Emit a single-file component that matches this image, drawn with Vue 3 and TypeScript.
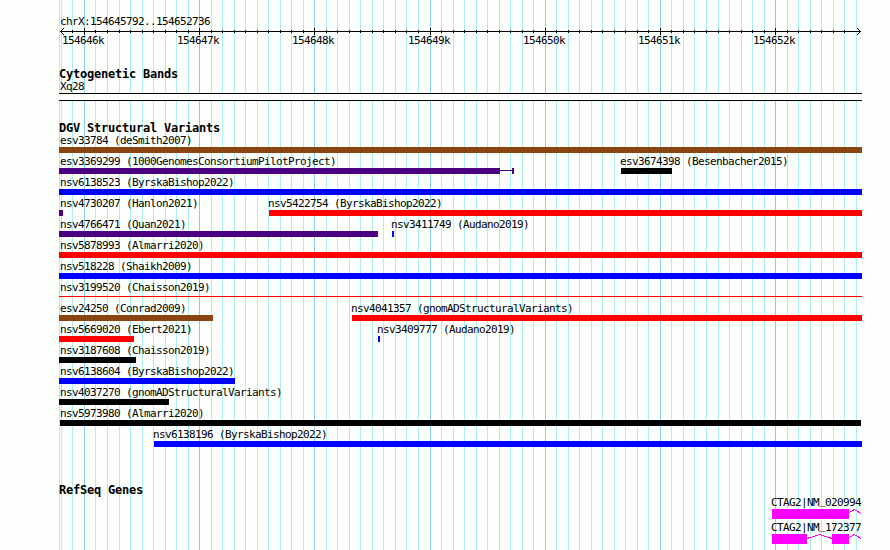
<script setup lang="ts">
interface Feature {
  label: string
  start: number
  end: number
  kind: 'brown' | 'purple' | 'blue' | 'red' | 'black' | 'thin'
  tail?: number
}

interface Gene {
  accession: string
  exons: [number, number][]
  introns: string[]
}

const LEFT = 59
const RIGHT = 862

const gridLines: number[] = [
  59, 61, 72, 84, 95, 107, 119, 130, 142, 153, 165, 176, 188, 199, 211, 222, 234, 245, 257, 268,
  280, 291, 303, 314, 326, 337, 349, 360, 372, 383, 395, 406, 418, 430, 441, 453, 464, 476, 487,
  499, 510, 522, 533, 545, 556, 568, 579, 591, 602, 614, 625, 637, 648, 660, 671, 683, 694, 706,
  718, 729, 741, 752, 764, 775, 787, 798, 810, 821, 833, 844, 856,
]
const majors: number[] = [84, 199, 314, 430, 545, 660, 775]
const isMajor = (x: number): boolean => majors.includes(x)
const ticks = gridLines.filter((x) => x > 61 && x < 856)

const rows: Feature[][] = [
  [{ label: 'esv33784 (deSmith2007)', start: LEFT, end: RIGHT, kind: 'brown' }],
  [
    { label: 'esv3369299 (1000GenomesConsortiumPilotProject)', start: LEFT, end: 500, kind: 'purple', tail: 14 },
    { label: 'esv3674398 (Besenbacher2015)', start: 621, end: 672, kind: 'black' },
  ],
  [{ label: 'nsv6138523 (ByrskaBishop2022)', start: LEFT, end: RIGHT, kind: 'blue' }],
  [
    { label: 'nsv4730207 (Hanlon2021)', start: LEFT, end: 63, kind: 'purple' },
    { label: 'nsv5422754 (ByrskaBishop2022)', start: 269, end: RIGHT, kind: 'red' },
  ],
  [
    { label: 'nsv4766471 (Quan2021)', start: LEFT, end: 378, kind: 'purple' },
    { label: 'nsv3411749 (Audano2019)', start: 392, end: 394, kind: 'blue' },
  ],
  [{ label: 'nsv5878993 (Almarri2020)', start: LEFT, end: RIGHT, kind: 'red' }],
  [{ label: 'nsv518228 (Shaikh2009)', start: LEFT, end: RIGHT, kind: 'blue' }],
  [{ label: 'nsv3199520 (Chaisson2019)', start: LEFT, end: RIGHT, kind: 'thin' }],
  [
    { label: 'esv24250 (Conrad2009)', start: LEFT, end: 213, kind: 'brown' },
    { label: 'nsv4041357 (gnomADStructuralVariants)', start: 352, end: RIGHT, kind: 'red' },
  ],
  [
    { label: 'nsv5669020 (Ebert2021)', start: LEFT, end: 134, kind: 'red' },
    { label: 'nsv3409777 (Audano2019)', start: 378, end: 380, kind: 'blue' },
  ],
  [{ label: 'nsv3187608 (Chaisson2019)', start: LEFT, end: 136, kind: 'black' }],
  [{ label: 'nsv6138604 (ByrskaBishop2022)', start: LEFT, end: 235, kind: 'blue' }],
  [{ label: 'nsv4037270 (gnomADStructuralVariants)', start: LEFT, end: 169, kind: 'black' }],
  [{ label: 'nsv5973980 (Almarri2020)', start: 60, end: 861, kind: 'black' }],
  [{ label: 'nsv6138196 (ByrskaBishop2022)', start: 154, end: RIGHT, kind: 'blue' }],
]

const genes: Gene[] = [
  { accession: '020994', exons: [[0, 77]], introns: ['77,3.5 82.5,0.5 89,4.5'] },
  {
    accession: '172377',
    exons: [[0, 35], [60, 77]],
    introns: ['35,4.5 47.5,0.5 60,4.5', '77,3.5 82.5,0.5 89,4.5'],
  },
]

const offset = (f: Feature): string => `${f.start - LEFT}px`
// Labels begin one pixel before their bar, but never left of the panel's text margin.
const labelShift = (f: Feature): string => `${Math.max(60, f.start - 1) - f.start}px`
</script>

<template>
  <main class="browser">
    <svg class="grid" width="890" height="550" shape-rendering="crispEdges" aria-hidden="true">
      <rect
        v-for="x in gridLines"
        :key="x"
        :x="x"
        y="0"
        width="1"
        height="550"
        :class="isMajor(x) ? 'major' : 'minor'"
      />
    </svg>

    <div class="panel">
      <div class="region">chrX:154645792..154652736</div>
      <svg class="ruler" width="803" height="7" viewBox="59 28 803 7" shape-rendering="crispEdges">
        <rect x="60" y="31" width="801" height="1" />
        <rect
          v-for="x in ticks"
          :key="x"
          :x="x"
          :y="isMajor(x) ? 28 : 30"
          width="1"
          :height="isMajor(x) ? 7 : 3"
        />
        <path d="M61 30h1v3h-1zM62 29h1v1h-1zM63 28h1v1h-1zM62 33h1v1h-1zM63 34h1v1h-1z" />
        <path d="M859 30h1v3h-1zM858 29h1v1h-1zM857 28h1v1h-1zM858 33h1v1h-1zM857 34h1v1h-1z" />
      </svg>
      <div class="scale">
        <span
          v-for="(x, i) in majors"
          :key="x"
          class="scale-label"
          :style="{ marginLeft: `${x - 22 - LEFT}px` }"
        >{{ 154646 + i }}k</span>
      </div>

      <h2 class="heading">Cytogenetic Bands</h2>
      <div class="band-label">Xq28</div>
      <div class="band"></div>

      <h2 class="heading variants">DGV Structural Variants</h2>
      <div v-for="(row, i) in rows" :key="i" class="row">
        <div v-for="f in row" :key="f.label" class="feature" :style="{ marginLeft: offset(f) }">
          <div class="label" :style="{ marginLeft: labelShift(f) }">{{ f.label }}</div>
          <div class="glyph">
            <div class="bar" :class="f.kind" :style="{ width: `${f.end - f.start}px` }"></div>
            <div v-if="f.tail" class="tail" :style="{ width: `${f.tail}px` }"></div>
          </div>
        </div>
      </div>

      <h2 class="heading genes">RefSeq Genes</h2>
      <div v-for="g in genes" :key="g.accession" class="gene">
        <div class="label">CTAG2|NM<span class="underscore">_</span>{{ g.accession }}</div>
        <svg class="model" width="90" height="10">
          <rect v-for="e in g.exons" :key="e[0]" :x="e[0]" y="0" :width="e[1] - e[0]" height="10" />
          <polyline v-for="p in g.introns" :key="p" :points="p" shape-rendering="crispEdges" />
        </svg>
      </div>
    </div>
  </main>
</template>

<style>
body {
  margin: 0;
  background: #fdfffc;
  overflow: hidden;
}
</style>

<style scoped>
.browser {
  position: relative;
  box-sizing: border-box;
  width: 890px;
  height: 550px;
  overflow: hidden;
  background: #fdfffc;
  color: #000;
  font: 11px/13px "DejaVu Sans Mono", "Liberation Mono", monospace;
  letter-spacing: -0.622px;
  white-space: nowrap;
}

.grid {
  position: absolute;
  inset: 0;
}

.minor { fill: #afeeee; }
.major { fill: #87ceeb; }

.panel {
  position: relative;
  width: 803px;
  padding: 15px 0 0 59px;
}

.region {
  height: 13px;
  padding-left: 1px;
}

.ruler { display: block; }

.scale {
  display: grid;
  height: 13px;
  margin-top: -1px;
}

.scale-label { grid-area: 1 / 1; }

.heading {
  height: 14px;
  margin: 20px 0 0;
  font-size: 12px;
  line-height: 14px;
  font-weight: 700;
  letter-spacing: -0.224px;
}

.band-label {
  height: 13px;
  margin-top: -1px;
  padding-left: 1px;
}

.band {
  box-sizing: border-box;
  height: 8px;
  border: solid #000;
  border-width: 1px 0;
  background: #fdfffc;
}

.heading.variants {
  height: 13px;
  margin-top: 20px;
}

.row {
  display: grid;
  grid-template-columns: 803px;
  height: 21px;
}

.feature { grid-area: 1 / 1; }

.label { height: 13px; }

.glyph {
  display: flex;
  align-items: center;
  height: 6px;
}

.bar { height: 6px; }
.brown { background: #8b4513; }
.purple { background: #4b0082; }
.blue { background: #00f; }
.red { background: #f00; }
.black { background: #000; }

.thin {
  height: 1px;
  margin-bottom: 1px;
  background: #f00;
}

.tail {
  box-sizing: border-box;
  height: 6px;
  border-right: 2px solid #4b0082;
  background: linear-gradient(#4b0082, #4b0082) 0 2px / 100% 1px no-repeat;
}

.heading.genes {
  margin: 34px 0 -1px;
}

.gene {
  height: 25px;
  padding-left: 713px;
}

.gene .label { margin-left: -1px; }

.underscore {
  line-height: 1px;
  vertical-align: 2px;
}

.model {
  display: block;
  fill: #f0f;
}

.model polyline {
  fill: none;
  stroke: #f0f;
}
</style>
